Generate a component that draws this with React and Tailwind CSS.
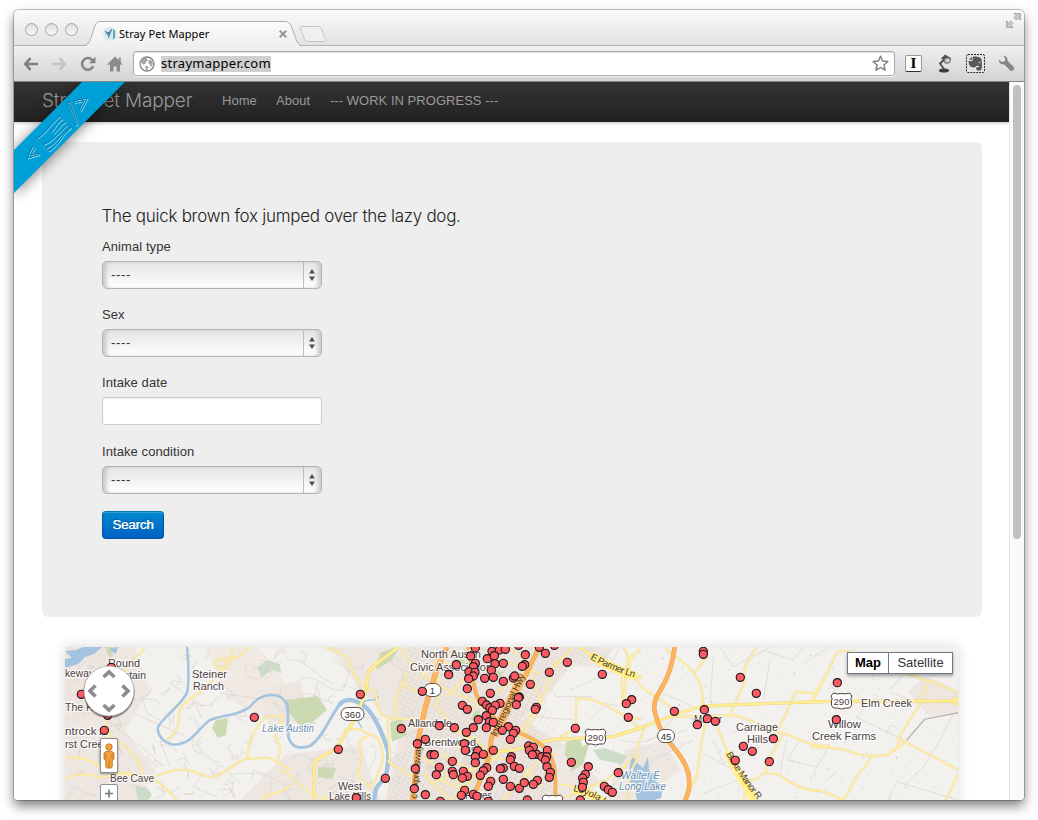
import React from "react";

/* Map geometry is kept in tiles; each tile has a horizontal origin in window pixels
   and coordinates at three units per pixel. */
const TILE = { A: 60, B: 280, C: 440, D: 620, E: 810 };
const at = (t) => `translate(${TILE[t]} 640) scale(0.33333)`;

const MINOR = [
  ["A", "M15 352C60 350 100 360 125 385C150 405 200 398 270 415C310 400 350 385 380 390C420 395 430 415 460 410C500 400 520 370 560 355C600 358 620 345 650 365L690 388"],
  ["A", "M15 420C40 400 80 400 120 412L200 398C240 405 270 412 300 430C320 450 335 460 352 482"],
  ["A", "M140 236C142 265 150 305 185 312C225 340 240 370 250 402"],
  ["A", "M520 21L505 85C490 92 465 90 462 65C480 50 500 62 535 50L575 18"],
  ["A", "M505 60C470 100 440 150 415 160C370 190 352 200 357 240C355 270 340 280 325 300"],
  ["A", "M560 355C565 320 580 270 608 240C625 220 645 235 668 225C665 260 640 280 648 300C670 320 655 340 655 362"],
  ["A", "M605 480C630 450 660 470 690 435"],
  ["A", "M255 21C235 60 215 50 195 100"],
  ["B", "M135 21C165 35 200 40 210 70C215 100 240 130 260 145C305 150 280 190 300 215C310 240 345 235 415 240"],
  ["B", "M0 390C35 395 40 430 95 462L150 480"],
  ["B", "M190 270C220 275 230 255 265 282C310 290 300 330 310 350C300 400 290 410 275 440C215 420 240 370 245 345C250 320 215 300 265 290"],
  ["B", "M325 360C330 385 370 380 380 400L410 412"],
  ["B", "M370 21C365 60 400 65 440 110C490 150 530 160 600 190"],
  ["B", "M385 95L345 180L350 230M365 130L425 165M322 240L330 360"],
  ["B", "M480 110L470 200L600 340M440 240L600 300M410 340L600 470M420 120L500 21M430 400L500 470"],
  ["B", "M440 300C500 300 540 330 600 335M520 30L600 70M450 430L600 380"],
  ["C", "M410 265C405 200 410 180 410 175C480 175 520 210 550 225L600 237"],
  ["C", "M410 265L350 298"],
  ["C", "M545 195C555 150 535 130 550 100C575 60 560 40 550 21"],
  ["C", "M350 430C400 440 460 450 500 482M355 480L500 420L540 380"],
  ["C", "M0 250L100 300L160 340M0 60L90 100L180 60L300 100M200 21L260 60L300 180L230 290M20 170L110 80M0 340L150 420M30 480L220 300M90 210L250 100"],
  ["C", "M155 360C200 340 250 380 310 440M190 480L300 360L350 340M350 60L290 220L240 300M400 21L345 80M0 420L120 470"],
  ["C", "M600 340L570 400L560 480M600 30L560 60"],
  ["D", "M0 92C40 98 50 115 60 135C80 160 130 175 165 214L165 230C250 232 330 220 360 230C420 250 460 280 490 280C540 295 560 318 630 318"],
  ["D", "M10 200C20 160 5 120 30 80C20 50 60 40 60 21"],
  ["D", "M75 260L45 340L0 400M60 270L20 225"],
  ["D", "M135 21C160 60 200 60 220 100C245 130 250 160 248 200"],
  ["D", "M220 100L262 50"],
  ["D", "M410 21L375 80L372 130L330 225"],
  ["D", "M258 245C240 300 242 340 230 410L205 460"],
  ["D", "M290 262C310 290 310 320 330 350L375 410L415 482"],
  ["D", "M372 480L380 420C430 425 420 390 440 400C500 400 480 420 530 435C560 460 600 440 630 465"],
  ["D", "M440 400L440 370L490 280"],
  ["D", "M475 270L528 155L585 160L630 85"],
  ["E", "M10 182L70 60C80 30 90 28 125 35L160 60"],
  ["E", "M0 157L15 160L10 182"],
  ["E", "M0 318C50 328 80 318 120 335C160 350 200 350 235 345C260 330 270 310 265 295L330 190L358 120L445 160"],
  ["E", "M290 100L358 125M265 295L445 390"],
  ["E", "M240 335C280 320 285 305 290 300"],
  ["E", "M183 350L160 388L150 392L100 482"],
  ["E", "M0 455C40 440 60 470 100 478M445 400C430 430 425 450 405 482"],
];

const MAJOR = [
  ["B", "M355 21C320 50 270 80 265 100L258 150L230 230L190 290C170 340 130 340 105 365C95 400 105 440 100 480"],
  ["C", "M160 335C250 335 290 302 350 298L520 290L605 263"],
  ["D", "M0 283C80 262 150 222 250 198L450 190L630 184"],
  ["E", "M55 184L445 183M425 183L445 172M425 183L445 195"],
  ["C", "M420 21C450 45 500 85 550 98L605 112"],
];

const HIGHWAY = [
  ["B", "M500 21L470 90C450 150 425 240 415 300L408 390L398 482", 13],
  ["C", "M85 21C100 110 95 190 155 215", 9],
  ["C", "M300 15L255 110L200 210L155 290L145 360L95 482", 11],
  ["C", "M155 225C200 275 280 285 310 320C345 350 350 400 345 482", 8],
  ["D", "M165 15C155 90 140 120 110 170C95 200 105 220 115 250C130 300 190 340 205 400C212 440 205 460 195 482", 11],
];

const PATHS_GREY = [
  ["A", "M180 170C240 190 300 160 300 200M20 210L130 230L280 350M80 280L200 245M250 180L260 220L300 240M480 120L560 210M400 330L480 370L540 430M520 400L610 400L680 440M30 440L110 470M330 380L300 300L350 330"],
  ["A", "M570 60C540 90 560 130 610 110C640 130 650 60 600 60M220 220L380 290M480 160L590 175M430 400L400 440L470 470"],
  ["B", "M20 60C80 50 100 110 160 130M60 120C100 90 140 160 190 150M160 60L210 90L190 150M30 360C70 320 90 370 130 360M140 380L200 330L230 340M10 200L80 160L160 190M270 320C300 300 290 380 260 390M110 440C150 390 200 430 160 460"],
  ["C", "M330 140L350 170L460 170M390 150L530 90M290 230L400 240M380 330L480 400M440 21L520 60L540 21M450 240L500 190L545 200M350 320L390 310L420 260"],
  ["D", "M130 160L220 200M280 50L270 190M300 21L340 80L450 21M425 30L520 60L550 21M550 70L630 20M450 60L430 180M60 380L220 300M80 300L200 270M250 340L340 390M250 460L380 410M280 300L310 370L420 320M500 300L480 400M540 300L500 360L590 380M0 300C120 330 120 260 165 232"],
  ["E", "M130 21L190 110M240 150L290 90L270 60M240 155L320 190M135 230L280 300M60 130L90 180M230 280L240 255L265 265M0 420L60 310M235 480L260 425L445 480M280 440L340 380L390 300L430 220M45 425L80 395M140 235L170 190M170 90L200 70"],
];

const DOTS = {
  A: [[154, 82], [64, 163], [583, 232], [143, 226], [133, 271]],
  B: [[241, 163], [175, 328], [364, 266], [316, 415], [229, 473], [427, 154], [412, 311], [436, 298], [453, 344], [463, 344], [478, 257], [406, 386], [403, 446], [436, 464], [478, 382], [469, 404], [481, 484]],
  C: [[106, 24], [92, 48], [156, 34], [178, 30], [142, 56], [163, 47], [196, 28], [236, 16], [298, 22], [343, 16], [316, 40], [256, 44], [382, 67], [254, 74], [247, 79], [49, 74], [26, 104], [106, 70], [100, 80], [87, 95], [105, 97], [100, 108], [86, 116], [165, 71], [190, 70], [154, 91], [134, 115], [160, 112], [190, 124], [220, 114], [224, 108], [328, 97], [271, 133], [82, 146], [151, 160], [487, 103], [127, 184], [67, 196], [82, 208], [140, 195], [150, 203], [180, 190], [166, 196], [157, 211], [238, 171], [235, 173], [229, 194], [289, 202], [286, 208], [575, 179], [559, 191], [565, 232], [115, 239], [139, 227], [148, 245], [139, 263], [160, 247], [100, 263], [79, 277], [43, 263], [205, 260], [187, 271], [227, 271], [220, 280], [211, 298], [406, 265], [73, 311], [76, 331], [113, 332], [130, 343], [160, 331], [106, 350], [106, 368], [37, 364], [266, 318], [280, 322], [268, 331], [290, 343], [277, 344], [322, 331], [306, 350], [320, 350], [316, 360], [214, 350], [211, 359], [394, 367], [445, 380], [535, 398], [321, 380], [331, 397], [328, 412], [37, 394], [40, 404], [70, 394], [82, 409], [67, 414], [140, 383], [130, 392], [121, 406], [190, 384], [181, 386], [223, 379], [238, 385], [190, 418], [152, 424], [145, 439], [211, 439], [238, 445], [253, 428], [292, 421], [280, 433], [436, 403], [428, 414], [430, 427], [427, 442], [493, 439], [505, 449], [517, 457], [74, 451], [64, 466], [100, 463], [111, 469], [262, 480], [421, 480], [145, 484]],
  D: [[250, 34], [250, 43], [361, 112], [409, 160], [163, 214], [253, 209], [262, 236], [232, 254], [286, 244], [460, 296], [370, 319], [397, 334], [346, 361], [448, 365]],
  E: [[82, 128], [79, 239]],
};

function random(seed) {
  let s = seed;
  return () => (s = (s * 16807) % 2147483647) / 2147483647;
}
const rnd = random(4711);
const PONDS = Array.from({ length: 230 }, () => [600 + rnd() * 355, 648 + rnd() * 150, 0.4 + rnd() * 0.8, 0.5 + rnd() * 1.2]);
const LOOPS = Array.from({ length: 120 }, () => {
  const x = 68 + rnd() * 350;
  const y = 650 + rnd() * 146;
  const n = () => ((rnd() - 0.5) * 16).toFixed(1);
  return `M${x.toFixed(1)} ${y.toFixed(1)}q${n()} ${n()} ${n()} ${n()}t${n()} ${n()}`;
});

function Roads({ items, casing, fill, width }) {
  return (
    <>
      {[casing, fill].map((c, i) => (
        <g key={i} fill="none" stroke={c} strokeLinejoin="round">
          {items.map(([t, d, w], k) => (
            <path key={k} d={d} transform={at(t)} strokeWidth={(w || width) + (i ? 0 : 3)} />
          ))}
        </g>
      ))}
    </>
  );
}

function Label({ x, y, w, size = 11, children, ...rest }) {
  return (
    <text x={x} y={y} fontSize={size} textLength={w} lengthAdjust="spacingAndGlyphs" fill="#4a3f3f" stroke="#fff" strokeOpacity="0.8" strokeWidth="2.4" paintOrder="stroke" {...rest}>
      {children}
    </text>
  );
}

function UsShield({ x, y, n }) {
  return (
    <g transform={`translate(${x} ${y})`}>
      <path d="M-8-8Q-4-6.500 0-7.500Q4-6.500 8-8L10.500-5Q8.500-2 10-0Q11 5 8 7Q4 6.500 0 8Q-4 6.500-8 7Q-11 5-10 0Q-8.500-2-10.500-5Z" fill="#fff" stroke="#4d4142" strokeWidth="1" />
      <text y="3.500" fontSize="9.500" textAnchor="middle" fill="#4d4142">{n}</text>
    </g>
  );
}

function StateShield({ x, y, w, n }) {
  return (
    <g transform={`translate(${x} ${y})`}>
      <rect x={-w / 2} y="-6.500" width={w} height="13" rx="6.500" fill="#fff" stroke="#4d4142" strokeWidth="0.9" />
      <text y="3.500" fontSize="9.500" textAnchor="middle" fill="#333">{n}</text>
    </g>
  );
}

function MapCanvas() {
  return (
    <svg viewBox="65 647 893 153" width="893" height="153" className="block" fontFamily="'Liberation Sans', Arial, sans-serif">
      <defs>
        <pattern id="blocks" width="5" height="4" patternUnits="userSpaceOnUse" patternTransform="rotate(25)">
          <path d="M0 0H5M0 0V4" stroke="#d6cdc5" strokeWidth="0.7" fill="none" />
        </pattern>
        <pattern id="blocks2" width="7" height="5" patternUnits="userSpaceOnUse" patternTransform="rotate(-62)">
          <path d="M0 0H7M0 0V5" stroke="#dbd2ca" strokeWidth="0.6" fill="none" />
        </pattern>
        <path id="parmer" d="M590 659Q612 671 639 679" />
        <path id="interreg" d="M496 737L526 674" />
        <path id="blake" d="M726 754Q738 776 760 803" />
        <path id="mopac" d="M417 799L422 742" />
        <path id="loyola" d="M573 791Q592 795 608 807" />
      </defs>
      <rect x="65" y="647" width="893" height="153" fill="#f3f1ee" />

      <g fill="#eee6e0">
        <path d="M65 647H135L150 690L125 730L155 770L140 800H65Z" />
        <path d="M205 647H258L290 690L270 720L230 700Z" opacity=".7" />
        <path d="M330 647H615L600 668L570 665L545 700L520 720L560 742L600 780L585 800H385L400 730L360 690Z" />
        <path d="M285 755L360 745L380 800H240Z" />
        <path d="M625 750L665 740L680 770L640 800H605Z" />
        <path d="M908 692L925 676L958 690V712L930 716Z" />
        <path d="M260 690L300 680L310 720L270 730Z" />
      </g>
      <path d="M410 647H600L560 680L525 715L550 745L560 800H385L405 740L395 690Z" fill="url(#blocks)" />
      <path d="M480 700L540 680L560 740L540 800H440L420 740Z" fill="url(#blocks2)" />
      <path d="M65 647H118L110 690L85 720H65Z" fill="url(#blocks2)" />
      <g fill="#e5d9d2">
        <path d="M462 758L480 750L492 762L480 778L466 774Z" />
        <path d="M425 765L440 758L446 770L432 778Z" />
      </g>

      <g fill="#cbdab0">
        <path d="M285 700L318 696L327 710L303 730L290 714Z" />
        <path d="M216 720L228 718L226 735L218 738L212 728Z" />
        <path d="M380 653L400 646L392 660L376 670Z" />
        <path d="M390 722L402 719L407 735L392 742Z" />
        <path d="M318 767L336 768L332 779L318 777Z" />
        <path d="M566 742L580 738L584 756L572 766L565 755Z" />
        <path d="M577 750L590 742L583 764L570 772Z" />
        <path d="M454 655L462 652L466 666L459 672Z" />
        <path d="M105 647H114L110 660Z" />
        <path d="M474 712L480 710L478 722L471 720Z" />
        <path d="M495 670L503 672L500 680Z" />
      </g>
      <g fill="#cbdcc8">
        <path d="M257 667L268 660L280 664L281 673L272 670L262 677Z" />
        <path d="M135 785L147 788L152 795L148 800H138Z" />
        <path d="M98 750L108 747L110 768L98 762Z" />
        <path d="M593 750L604 748L627 756L622 764L600 760Z" />
      </g>

      <g fill="none" stroke="#d9d2cd" strokeWidth="0.7">
        {LOOPS.map((d, i) => <path key={i} d={d} />)}
      </g>
      <g fill="none" stroke="#dad8d4" strokeWidth="2.4" strokeLinejoin="round">
        {PATHS_GREY.map(([t, d], i) => <path key={i} d={d} transform={at(t)} />)}
      </g>

      <g fill="#b1cde6">
        {PONDS.map(([x, y, w, h], i) => <rect key={i} x={x} y={y} width={w} height={h} />)}
      </g>
      <g fill="#a4c3de">
        <path d="M65 651L76 650L84 647H102L94 654L85 657L78 664L65 668V659L72 658Z" />
        <path d="M109 649L118 647L116 654Z" />
        <path d="M632 754L637 763L643 768L648 757L649 770L654 774L659 769L656 779L663 787L661 798L654 800H637L635 790L628 779L622 777L629 771Z" />
      </g>
      <g fill="none" stroke="#a4c3de" strokeLinecap="round">
        <path transform={at("A")} strokeWidth="7.500" d="M381 18C388 90 385 130 383 150C375 190 300 235 293 265C295 300 330 318 355 313C400 305 420 260 450 240C490 225 540 225 570 200C600 160 660 150 680 192" />
        <path transform={at("B")} strokeWidth="8.500" d="M20 192C28 215 20 250 25 290C35 325 60 327 90 318C130 290 150 230 180 192" />
        <path transform={at("B")} strokeWidth="13" d="M180 192C200 170 235 180 260 205C290 235 315 300 325 335C325 390 320 410 300 430C283 445 285 465 283 484" />
        <path transform={at("B")} strokeWidth="4" d="M225 210C235 240 255 215 250 190C255 170 290 190 295 170M225 230L245 262" />
      </g>

      <Roads items={MINOR} casing="#efdba9" fill="#fff0a3" width={4} />
      <Roads items={MAJOR} casing="#ecd28c" fill="#ffee92" width={7} />
      <Roads items={HIGHWAY} casing="#e9a04a" fill="#fdb45f" width={11} />
      <path transform={at("E")} d="M290 300L345 237L445 218" fill="none" stroke="#b8b5b2" strokeWidth="4" />

      <g fill="none" strokeLinecap="butt">
        <path d="M591 656Q612 668 636 677" stroke="#fff08d" strokeWidth="9" />
        <path d="M727 752Q738 774 754 800" stroke="#fff08d" strokeWidth="8" />
        <path d="M573 789Q592 793 608 805" stroke="#fff08d" strokeWidth="8" />
        <path d="M494 736L523 675" stroke="#fdb869" strokeWidth="9" />
      </g>
      <g fontSize="9.500" fill="#4a3b2a">
        <text><textPath href="#parmer" textLength="48">E Parmer Ln</textPath></text>
        <text><textPath href="#interreg" textLength="68">Interregional Hwy</textPath></text>
        <text><textPath href="#blake" textLength="56">Blake Manor R</textPath></text>
        <text><textPath href="#mopac" textLength="54">c Expressway</textPath></text>
        <text><textPath href="#loyola">Loyola Ln</textPath></text>
      </g>

      <StateShield x={471} y={749} w={17} n="69" />
      <Label x="108" y="667" w="32">Round</Label>
      <Label x="65" y="677" w="29">keway</Label>
      <Label x="103" y="679" w="43">Mountain</Label>
      <Label x="65" y="711" w="41">The Hills</Label>
      <Label x="65" y="734.500" w="42">ntrock A</Label>
      <Label x="65" y="748" w="44">rst Creek</Label>
      <Label x="192" y="678" w="35">Steiner</Label>
      <Label x="193" y="690" w="31">Ranch</Label>
      <Label x="110" y="782" w="44">Bee Cave</Label>
      <Label x="262" y="731.500" w="52" fill="#6d90b5" fontStyle="italic" size={10.5}>Lake Austin</Label>
      <Label x="338" y="790" w="24">West</Label>
      <Label x="329" y="800" w="42">Lake Hills</Label>
      <Label x="421" y="658" w="60">North Austin</Label>
      <Label x="410" y="671" w="82">Civic Association</Label>
      <Label x="408" y="727" w="44">Allandale</Label>
      <Label x="424" y="746" w="52">Brentwood</Label>
      <Label x="465" y="799" w="27">Hayes</Label>
      <Label x="621" y="779" w="39" fill="#6d90b5" fontStyle="italic" size={10.5}>Walter E</Label>
      <Label x="619" y="790" w="47" fill="#6d90b5" fontStyle="italic" size={10.5}>Long Lake</Label>
      <Label x="694" y="723" w="28">Manor</Label>
      <Label x="736" y="731" w="42">Carriage</Label>
      <Label x="747" y="743" w="21">Hills</Label>
      <Label x="861" y="707" w="51">Elm Creek</Label>
      <Label x="828" y="728" w="33">Willow</Label>
      <Label x="812" y="740" w="64">Creek Farms</Label>

      <StateShield x={352.500} y={714} w={23} n="360" />
      <StateShield x={432.500} y={690} w={17} n="1" />
      <StateShield x={666} y={736} w={17} n="45" />
      <UsShield x={595.500} y={737} n="290" />
      <UsShield x={841.500} y={701} n="290" />
      <UsShield x={552.500} y={803} n="183" />

      {Object.entries(DOTS).map(([t, pts]) => (
        <g key={t} transform={at(t)} fill="#fd5961" stroke="#17191f" strokeWidth="3.400">
          {pts.map(([x, y], i) => <circle key={i} cx={x} cy={y} r="12.300" />)}
        </g>
      ))}
    </svg>
  );
}

function PanControl() {
  return (
    <svg width="60" height="58" viewBox="79 662 60 58" className="absolute left-[14px] top-[15px]">
      <circle cx="109" cy="693" r="25.500" fill="#000" opacity=".25" />
      <circle cx="109" cy="692" r="25.700" fill="#555" opacity=".45" />
      <circle cx="109" cy="691" r="25" fill="#fff" stroke="#a5a5a5" strokeWidth="0.6" />
      <g fill="none" stroke="#8d8d8d" strokeWidth="3.600">
        <path d="M103.500 677L109 672L114.500 677M103.500 705L109 710L114.500 705M95.500 685.500L90 691L95.500 696.500M122.500 685.500L128 691L122.500 696.500" />
      </g>
    </svg>
  );
}

function SelectBox() {
  return (
    <div className="flex h-[28px] w-[220px] overflow-hidden rounded-[5px] border border-[#b3b3b3] bg-linear-to-b from-[#e4e4e4] to-white text-[13px] shadow-[inset_5px_0_4px_-2px_#c6c6c6,inset_-5px_0_4px_-2px_#c9c9c9]">
      <span className="flex-1 pl-[8px] leading-[25px] tracking-[0.7px]">----</span>
      <span className="flex w-[18px] items-center justify-center border-l border-[#bdbdbd] pr-[1px]">
        <svg width="6" height="12" viewBox="0 0 6 12" fill="#4e4e4e">
          <path d="M3 0L6 4.500H0ZM3 12L6 7.500H0Z" />
        </svg>
      </span>
    </div>
  );
}

function Field({ label, children }) {
  return (
    <div>
      <label className="mb-[5px] block h-[18px] text-[13px] leading-[18px] tracking-[0.08px]">{label}</label>
      {children}
    </div>
  );
}

function Ribbon() {
  return (
    <svg width="130" height="130" viewBox="14 82 130 130" className="absolute left-0 top-0">
      <path d="M82 82H125L14 193V150Z" fill="#009fd6" className="drop-shadow-[0_2px_7px_rgba(0,0,0,0.5)]" />
      {[["#9be2f8", 1], ["#0a76a6", 0]].map(([c, o]) => (
        <g key={c} transform={`translate(${o * 0.7} ${o})`} fill="none" stroke={c} strokeWidth="0.9" strokeLinejoin="round">
          <path d="M32.500 146L27.500 158L39.500 154.500L38 153L31 155L34.500 148Z" />
          <path d="M67.500 102.500L76 125.500L77.500 124L70 102Z" />
          <path d="M74 100.500L87.500 98L81 110.500L79.500 109L84 100.500L75 102.500Z" />
          <path d="M36.500 138.500C45 134 50 124 60 116L71 128C63 132 59 145 49 151Z" />
          <path d="M51.500 131.500C56 126 58 121 62.500 118.500M53.500 133.500C59 129 61 124 65.500 121.500M43 144.500C54 141 60 130 68 124.500M46 148C55 145 60 134 70 127" />
        </g>
      ))}
    </svg>
  );
}

function Tool({ children, wide }) {
  return <span className={"flex h-[34px] shrink-0 items-center justify-center " + (wide ? "w-[31px]" : "w-[28px]")}>{children}</span>;
}

function TabStrip() {
  return (
    <div className="flex h-[36px] shrink-0 items-start bg-linear-to-b from-[#fafafa] to-[#e2e2e2] shadow-[inset_0_-1px_0_#b3b3b3]">
      <div className="flex gap-[7px] pl-[11px] pt-[13px]">
        {[0, 1, 2].map((i) => (
          <span key={i} className="h-[13px] w-[13px] rounded-full border border-[#a5a5a5] bg-linear-to-b from-[#dcdcdc] to-[#fbfbfb]" />
        ))}
      </div>
      <div className="relative ml-[5px] h-[36px] w-[220px]">
        <svg width="220" height="37" viewBox="84 9 220 37" className="absolute left-0 top-0">
          <defs>
            <linearGradient id="tab" x1="0" y1="0" x2="0" y2="1">
              <stop offset="0" stopColor="#fbfbfb" />
              <stop offset="1" stopColor="#efefef" />
            </linearGradient>
          </defs>
          <path d="M84 45.500C90 45 90.500 41 93 34C95.500 27 96 20.500 101 20.500H286C292 20.500 293 28 295.500 34C298 41 298.500 45 304 45.500V46H84Z" fill="url(#tab)" />
          <path d="M84 44.500C89.500 44.500 90.500 41 93 34C95.500 27 96 20.500 101 20.500H286C292 20.500 293 28 295.500 34C298 41 298.500 44.500 304 44.500" fill="none" stroke="#aeaeae" />
        </svg>
        <div className="relative flex h-[24px] items-center pl-[20px] pr-[16px] translate-y-[12px]">
          <svg width="14" height="14" viewBox="0 0 14 14">
            <circle cx="7" cy="7" r="7" fill="#d9e9ef" />
            <path d="M1 3.500Q4 5 6 5L8.500 1.500L9 3L6.500 9L6 12L4.500 8Z" fill="#4c8ca6" />
            <path d="M10 2L12 3.500V11L10 12.500Z" fill="#6aa5ba" />
          </svg>
          <span className="ml-[2px] flex-1 whitespace-nowrap text-[11px] leading-[14px] tracking-[0.08px] text-black [font-family:'Noto_Sans','Open_Sans',sans-serif]">Stray Pet Mapper</span>
          <svg width="8" height="8" viewBox="0 0 8 8" stroke="#979797" strokeWidth="2"><path d="M.7.700L7.300 7.300M7.300.700L.7 7.300" /></svg>
        </div>
      </div>
      <svg width="28" height="18" viewBox="299 25 28 18" className="mt-[15px] -ml-[4px]">
        <path d="M302 26.500H318C320 26.500 321 27.500 322 30L325.500 39.500C326 41 325 41.500 324 41.500H309C306 41.500 305 40.500 304 38L300.500 29C300 27.500 300.500 26.500 302 26.500Z" fill="#efefef" stroke="#c4c4c4" />
      </svg>
      <div className="flex-1" />
      <svg width="15" height="15" viewBox="0 0 15 15" className="mr-[3px] mt-[3px]" fill="#c8c8c8" stroke="#a0a0a0" strokeWidth="0.9">
        <path d="M8 .6H14.400V7L12.300 5L10.300 7L8 4.700L10 2.700Z" />
        <path d="M7 14.400H.6V8L2.700 10L4.700 8L7 10.300L5 12.300Z" />
      </svg>
    </div>
  );
}

function Toolbar() {
  return (
    <div className="flex h-[36px] shrink-0 items-center border-b border-[#858585] bg-linear-to-b from-[#f0f0f0] to-[#d3d3d3] pl-[3px] pr-[2px]">
      <Tool><svg width="16" height="14" viewBox="0 0 16 14" fill="none" stroke="#808080" strokeWidth="2.600"><path d="M7.500 1.200L2.200 7L7.500 12.800M2.500 7H15" /></svg></Tool>
      <Tool><svg width="16" height="14" viewBox="0 0 16 14" fill="none" stroke="#c4c4c4" strokeWidth="2.600"><path d="M8.500 1.200L13.800 7L8.500 12.800M13.500 7H1" /></svg></Tool>
      <Tool><svg width="16" height="16" viewBox="0 0 16 16" className="translate-x-[1px]"><path d="M12.600 4.500A5.800 5.800 0 1 0 13.200 10.200" fill="none" stroke="#848484" strokeWidth="2.500" /><path d="M15.500.800V7.300H9Z" fill="#848484" /></svg></Tool>
      <Tool><svg width="16" height="16" viewBox="0 0 16 16" fill="#8a8a8a"><path d="M8 .5L.4 8.200L1.600 9.300L3 8V15.500H6.500V10.500H9.500V15.500H13V8L14.400 9.300L15.600 8.200L13.700 6.200V1.500H11.800V4.300Z" /></svg></Tool>
      <div className="ml-[4px] flex h-[25px] flex-1 items-center rounded-[3px] border border-[#ababab] bg-white pl-[5px] pr-[5px] shadow-[0_1px_0_#eee,inset_0_1px_1px_#ddd]">
        <svg width="16" height="16" viewBox="0 0 16 16">
          <circle cx="8" cy="8" r="7" fill="#fff" stroke="#858585" strokeWidth="1.300" />
          <path d="M2 5L5 1.800L8.500 1.500L8 3.500L9 4.500L7 6L6.500 8L4 8.500L2.500 7ZM10 3.500L13 4.500L14 7.500L13 10L11.500 10.500L11 8.500L9.500 7.500L9.500 5.500ZM6 9.500L9.500 10.500L8.500 14L7 14.300L6.500 12Z" fill="#a5a5a5" />
        </svg>
        <span className="ml-[6px] h-[16px] whitespace-nowrap bg-[#cfcfcf] text-[13px] leading-[15px] tracking-[0.27px] text-black [font-family:'Noto_Sans','Open_Sans',sans-serif]">straymapper.com</span>
        <span className="flex-1" />
        <svg width="17" height="17" viewBox="0 0 17 17"><path d="M8.500 1.200L10.600 6L15.900 6.500L11.900 10L13.100 15.200L8.500 12.500L3.900 15.200L5.100 10L1.100 6.500L6.400 6Z" fill="#fff" stroke="#7b7b7b" strokeWidth="1.400" strokeLinejoin="round" /></svg>
      </div>
      <div className="ml-[3px] flex">
        <Tool wide>
          <span className="flex h-[17px] w-[17px] items-center justify-center rounded-[2px] border border-[#999] border-b-[#333] bg-[#fafafa] text-[15px] font-bold leading-none text-black [font-family:'Liberation_Serif',serif]">I</span>
        </Tool>
        <Tool wide>
          <svg width="16" height="19" viewBox="0 0 16 19">
            <ellipse cx="7" cy="16.500" rx="5" ry="2" fill="#3d3d3d" />
            <path d="M7 15L3 9.500L8 5" fill="none" stroke="#4b4b4b" strokeWidth="1.800" />
            <path d="M4 4.500L8 .5L14 4L13 9L8 9.500L6.500 6Z" fill="#555" />
            <ellipse cx="10.500" cy="6.500" rx="3" ry="2.600" fill="#ccc" stroke="#777" />
          </svg>
        </Tool>
        <Tool wide>
          <svg width="19" height="19" viewBox="0 0 19 19">
            <rect x=".5" y=".5" width="18" height="18" rx="1.500" fill="#e3e3e3" stroke="#2a2a2a" strokeDasharray="2 1" />
            <path d="M7 2.500L10.500 2.500C13 3 15 3.500 15.500 5.500C16.300 9 16 13 15.300 15.500C14.500 17.300 10.500 17 10.200 15C10 13 12 12.500 13 13.500V12C11.500 11.500 10.500 12 9.500 13C7 14 4 13 3 10.500L2.500 7H6.500Z" fill="#595959" />
            <path d="M3 5.800L6 2.800V5.800Z" fill="#595959" />
            <path d="M12.500 8.500Q14 7.500 14.800 9" stroke="#ddd" fill="none" />
          </svg>
        </Tool>
        <Tool wide>
          <svg width="17" height="17" viewBox="0 0 17 17"><path d="M5.200.700C8 .5 10 3 9.500 5.800L16 12.200C17 14.500 14.500 16.800 12.300 15.500L6 9.200C3 9.800.5 7.500.9 4.500L3.800 7L6.800 6.300L7.300 3.500Z" fill="#858585" /></svg>
        </Tool>
      </div>
    </div>
  );
}

export default function App() {
  return (
    <div className="h-[820px] w-[1038px] overflow-hidden bg-white pl-[14px] pt-[10px] text-[#333] [font-family:'Liberation_Sans',Arial,sans-serif]">
      <div className="flex h-[790px] w-[1010px] flex-col overflow-hidden rounded-[5px] rounded-b-[4px] shadow-[0_0_0_1px_rgba(0,0,0,0.22),0_6px_12px_rgba(0,0,0,0.5)]">
        <TabStrip />
        <Toolbar />
        <div className="flex min-h-0 flex-1">
          <div className="relative w-[995px] shrink-0 overflow-hidden bg-white">
            <div className="flex h-[40px] items-center bg-linear-to-b from-[#333] to-[#222] pl-[28px] text-[13px] text-[#999] shadow-[0_1px_3px_rgba(0,0,0,0.25)]">
              <span className="w-[180px] whitespace-nowrap pb-[3px] text-[19px] font-light leading-[22px] tracking-[-0.14px] [font-family:Inter,'Liberation_Sans',sans-serif]">Stray Pet Mapper</span>
              <span className="w-[54px] pb-[2px] tracking-[0.05px]">Home</span>
              <span className="w-[54px] pb-[2px] tracking-[0.05px]">About</span>
              <span className="whitespace-nowrap pb-[2px] tracking-[0.03px]">--- WORK IN PROGRESS ---</span>
            </div>
            <div className="ml-[28px] mt-[20px] h-[475px] w-[940px] rounded-[6px] bg-[#eee] p-[60px]">
              <p className="mb-[9px] -ml-[0.5px] whitespace-nowrap text-[17px] font-light leading-[27px] tracking-[-0.28px] text-[#222] translate-y-[1px] [font-family:Inter,'Liberation_Sans',sans-serif]">The quick brown fox jumped over the lazy dog.</p>
              <div className="flex flex-col gap-[17px]">
                <Field label="Animal type"><SelectBox /></Field>
                <Field label="Sex"><SelectBox /></Field>
                <Field label="Intake date"><div className="mb-[1px] h-[28px] w-[220px] rounded-[3px] border border-[#ccc] bg-white shadow-[inset_0_1px_1px_rgba(0,0,0,0.075)]" /></Field>
                <Field label="Intake condition"><SelectBox /></Field>
                <button className="h-[28px] w-[62px] rounded-[4px] border border-[#0055a8] border-t-[#0077b3] bg-linear-to-b from-[#0088cc] to-[#0060c4] text-[13px] leading-[24px] text-white shadow-[inset_0_1px_0_rgba(255,255,255,0.2)] [text-shadow:0_-1px_0_rgba(0,0,0,0.25),0.4px_0_0_#fff]">Search</button>
              </div>
            </div>
            <div className="relative ml-[51px] mt-[30px] h-[180px] w-[893px] bg-[#f3f1ee] shadow-[0_0_12px_rgba(0,0,0,0.16)]">
              <MapCanvas />
              <PanControl />
              <div className="absolute left-[35px] top-[91px] flex h-[35px] w-[18px] items-center justify-center rounded-[2px] border border-[#8f8f8f] bg-white shadow-[0_1px_2px_rgba(0,0,0,0.4)]">
                <svg width="12" height="26" viewBox="0 0 12 26" fill="#f3a33b" stroke="#b56a17" strokeWidth="0.8">
                  <path d="M3 8.500Q6 7.500 9 8.500L11 10V16L9.300 17V23L8.500 25H3.500L2.700 23V17L1 16V10Z" />
                  <circle cx="6" cy="4" r="3.200" />
                  <path d="M6 16V24M3 11V16M9 11V16" />
                </svg>
              </div>
              <div className="absolute left-[35px] top-[137px] flex h-[20px] w-[18px] items-start justify-center rounded-t-[2px] border border-[#8f8f8f] bg-white pt-[4px]">
                <svg width="8" height="9" viewBox="0 0 8 9" stroke="#777" strokeWidth="1.600"><path d="M0 4.500H8M4 .5V8.500" /></svg>
              </div>
              <div className="absolute left-[782px] top-[5px] flex h-[22px] w-[106px] border border-[#717b87] bg-white text-[13px] leading-[20px] text-[#333] shadow-[0_2px_3px_rgba(0,0,0,0.35)]">
                <span className="w-[41px] border-r border-[#717b87] text-center font-bold text-black">Map</span>
                <span className="flex-1 text-center">Satellite</span>
              </div>
            </div>
            <Ribbon />
          </div>
          <div className="w-[15px] border-l border-[#e3e3e3] bg-[#fafafa] pl-[3px] pt-[3px]">
            <div className="h-[454px] w-[8px] rounded-full bg-[#c1c1c1]" />
          </div>
        </div>
      </div>
    </div>
  );
}
